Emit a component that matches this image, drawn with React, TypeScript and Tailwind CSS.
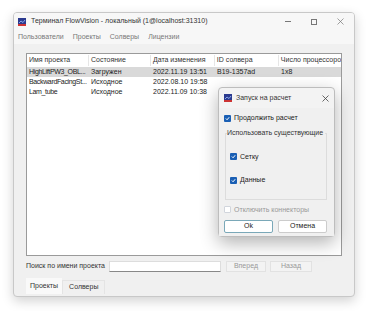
import React from 'react';

const rows = [
  { name: 'HighLiftPW3_OBL...', state: 'Загружен', date: '2022.11.19 13:51', id: 'B19-1357ad', cpu: '1x8', selected: true },
  { name: 'BackwardFacingSt...', state: 'Исходное', date: '2022.08.10 19:58', id: '', cpu: '', selected: false },
  { name: 'Lam_tube', state: 'Исходное', date: '2022.11.09 10:38', id: '', cpu: '', selected: false },
];

function AppIcon() {
  return (
    <svg width="8" height="8" viewBox="0 0 8 8">
      <rect width="8" height="8" fill="#2b3a8f" />
      <path d="M1 5 L3 3 L5 4.5 L7 2" stroke="#9fc3ff" strokeWidth="0.8" fill="none" />
      <rect x="0" y="6" width="8" height="2" fill="#c33" />
    </svg>
  );
}

function Check({ checked, disabled }: { checked: boolean; disabled?: boolean }) {
  if (!checked) {
    return <span className={`w-[7px] h-[7px] border rounded-[1px] bg-white ${disabled ? 'border-gray-300' : 'border-gray-500'}`} />;
  }
  return (
    <span className="w-[7px] h-[7px] rounded-[1px] bg-[#1a5fb4] flex items-center justify-center">
      <svg width="5" height="5" viewBox="0 0 6 6">
        <path d="M1 3 L2.5 4.5 L5 1.5" stroke="white" strokeWidth="1.2" fill="none" />
      </svg>
    </span>
  );
}

export default function App() {
  return (
    <div className="w-[368px] h-[311px] bg-white pl-[13px] pt-[12px] text-[7px] text-[#222] whitespace-nowrap" style={{ fontFamily: '"Liberation Sans", Arial, sans-serif' }}>
      <div className="relative w-[342px] h-[285px] border border-[#c8c8c8] rounded-[4px] bg-[#f0f0f0] shadow-[0_4px_12px_rgba(0,0,0,0.18)] flex flex-col overflow-hidden">
        {/* title bar */}
        <div className="h-[17px] bg-[#f7f7f7] flex items-center pl-[4px]">
          <AppIcon />
          <span className="ml-[5px] text-[#333]">Терминал FlowVision - локальный (1@localhost:31310)</span>
          <div className="ml-auto flex items-center gap-[20px] pr-[10px] text-[#555]">
            <span className="w-[6px] h-px bg-[#777]" />
            <span className="w-[6px] h-[6px] border border-[#777]" />
            <svg width="7" height="7" viewBox="0 0 7 7"><path d="M0.5 0.5 L6.5 6.5 M6.5 0.5 L0.5 6.5" stroke="#777" strokeWidth="0.7" /></svg>
          </div>
        </div>
        {/* menu */}
        <div className="h-[14px] bg-[#f7f7f7] flex items-center gap-[9px] pl-[4px] text-[#777]">
          <span>Пользователи</span>
          <span>Проекты</span>
          <span>Солверы</span>
          <span>Лицензии</span>
        </div>
        {/* content */}
        <div className="flex-1 flex flex-col pl-[12px] pr-[12px] pt-[9px]">
          <div className="h-[203px] border border-[#9a9a9a] bg-white flex flex-col">
            <div className="h-[13px] flex items-center text-[#333]">
              <span className="w-[62px] pl-[2px] border-r border-[#e6e6e6]">Имя проекта</span>
              <span className="w-[62px] pl-[2px] border-r border-[#e6e6e6]">Состояние</span>
              <span className="w-[64px] pl-[2px] border-r border-[#e6e6e6]">Дата изменения</span>
              <span className="w-[64px] pl-[2px] border-r border-[#e6e6e6]">ID солвера</span>
              <span className="pl-[2px] overflow-hidden">Число процессоро</span>
            </div>
            {rows.map((r) => (
              <div key={r.name} className={`h-[10px] flex items-center text-[#222] ${r.selected ? 'bg-[#d9d9d9]' : ''}`}>
                <span className="w-[62px] shrink-0 pl-[2px] tracking-[-0.35px]">{r.name}</span>
                <span className="w-[62px] shrink-0 pl-[2px]">{r.state}</span>
                <span className="w-[64px] shrink-0 pl-[2px]">{r.date}</span>
                <span className="w-[64px] shrink-0 pl-[2px]">{r.id}</span>
                <span className="pl-[2px]">{r.cpu}</span>
              </div>
            ))}
          </div>
          {/* search row */}
          <div className="mt-[4px] h-[13px] flex items-center">
            <span className="text-[#333]">Поиск по имени проекта</span>
            <span className="ml-[4px] w-[112px] h-[11px] bg-white border border-[#ddd] border-b-[#888]" />
            <span className="ml-[5px] w-[40px] h-[11px] border border-[#e2e2e2] bg-[#f3f3f3] text-[#999] flex items-center justify-center">Вперед</span>
            <span className="ml-[4px] w-[42px] h-[11px] border border-[#e2e2e2] bg-[#f3f3f3] text-[#999] flex items-center justify-center">Назад</span>
          </div>
          {/* tabs */}
          <div className="mt-[5px] flex items-end">
            <span className="h-[16px] px-[4px] flex items-center bg-[#f9f9f9] text-[#333]">Проекты</span>
            <span className="h-[14px] px-[6px] flex items-center border-t border-l border-r border-[#e4e4e4] text-[#333]">Солверы</span>
          </div>
        </div>

        {/* dialog */}
        <div className="absolute left-[204px] top-[74px] w-[117px] h-[150px] bg-[#f3f3f3] border border-[#bdbdbd] rounded-[4px] shadow-[0_6px_18px_rgba(0,0,0,0.3)] flex flex-col">
          <div className="h-[20px] flex items-center pl-[5px] pr-[5px]">
            <AppIcon />
            <span className="ml-[4px] text-[#333]">Запуск на расчет</span>
            <svg className="ml-auto" width="7" height="7" viewBox="0 0 7 7"><path d="M0.5 0.5 L6.5 6.5 M6.5 0.5 L0.5 6.5" stroke="#444" strokeWidth="0.8" /></svg>
          </div>
          <div className="flex-1 bg-[#f0f0f0] px-[5px] pt-[5px] flex flex-col">
            <div className="flex items-center gap-[3px]">
              <Check checked />
              <span>Продолжить расчет</span>
            </div>
            <div className="relative h-[67px] border border-[#dcdcdc] ml-[1px] mr-[2px] mt-[9px]">
              <span className="absolute -top-[6px] left-[1px] bg-[#f0f0f0] pr-[2px] text-[#333]">Использовать существующие</span>
              <div className="flex flex-col gap-[13px] pl-[4px] pt-[18px]">
                <div className="flex items-center gap-[3px]">
                  <Check checked />
                  <span>Сетку</span>
                </div>
                <div className="flex items-center gap-[3px]">
                  <Check checked />
                  <span>Данные</span>
                </div>
              </div>
            </div>
            <div className="mt-[5px] flex items-center gap-[3px] text-[#999]">
              <Check checked={false} disabled />
              <span>Отключить коннекторы</span>
            </div>
            <div className="mt-[5px] flex gap-[5px]">
              <span className="w-[49px] h-[13px] bg-white border border-[#7aa8b8] rounded-[2px] flex items-center justify-center">Ok</span>
              <span className="w-[49px] h-[13px] bg-white border border-[#ccc] rounded-[2px] flex items-center justify-center">Отмена</span>
            </div>
          </div>
        </div>
      </div>
    </div>
  );
}
